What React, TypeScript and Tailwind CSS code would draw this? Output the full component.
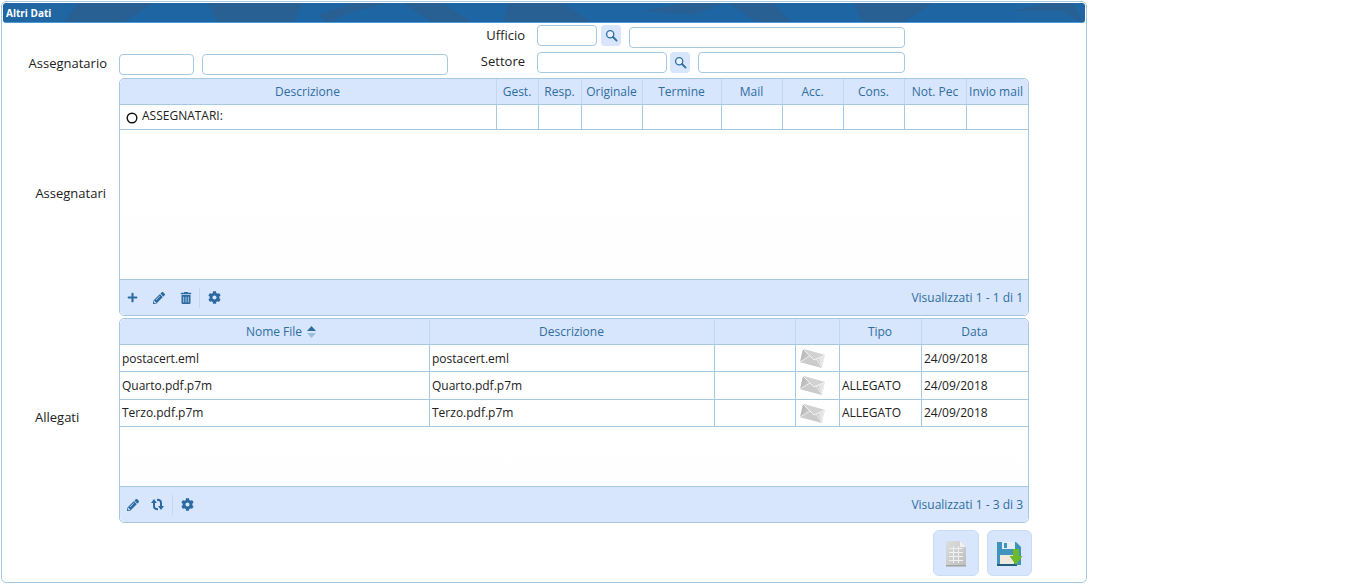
import { FaPlus, FaPencilAlt, FaTrashAlt, FaCog } from "react-icons/fa";

const Search = () => (
  <svg width="13" height="13" viewBox="0 0 13 13" fill="none">
    <circle cx="5.2" cy="5.2" r="3.6" stroke="#2f6f9f" strokeWidth="1.3" fill="#eaf2ff" />
    <path d="M8 8 L11.6 11.6" stroke="#2f6f9f" strokeWidth="1.8" strokeLinecap="round" />
  </svg>
);

const Refresh = () => (
  <svg width="13" height="13" viewBox="0 0 13 13" fill="none">
    <path d="M3 4 V8 Q3 11.2 7 11.2" stroke="#2a6aa0" strokeWidth="2" />
    <polygon points="0,5 6,5 3,1" fill="#2a6aa0" />
    <path d="M10 9 V5 Q10 1.8 6 1.8" stroke="#2a6aa0" strokeWidth="2" />
    <polygon points="7,8 13,8 10,12" fill="#2a6aa0" />
  </svg>
);

const Radio = () => (
  <svg className="mt-[2px] shrink-0" width="12" height="12" viewBox="0 0 12 12" fill="none">
    <circle cx="6" cy="6" r="4.8" stroke="#111" strokeWidth="1.4" />
  </svg>
);

const Envelope = () => (
  <svg width="27" height="21" viewBox="0 0 27 21">
    <defs>
      <linearGradient id="env" x1="0" y1="0" x2="1" y2="0.3">
        <stop offset="0" stopColor="#b0b0b0" />
        <stop offset="1" stopColor="#e8e8e8" />
      </linearGradient>
    </defs>
    <polygon points="4,1 26,7 23,20 1,14" fill="url(#env)" />
    <polygon points="4,1 15,12 26,7" fill="#d2d2d2" />
    <polygon points="1,14 11,8 15,12 19,10 23,20" fill="#cbcbcb" />
    <path d="M1 14 L11 8 M23 20 L17 10.5" stroke="#ececec" strokeWidth="1" />
    <path d="M4 1 L15 12 L26 7" stroke="#f2f2f2" strokeWidth="1" fill="none" />
  </svg>
);

const Doc = () => (
  <svg width="22" height="27" viewBox="0 0 22 27">
    <defs>
      <linearGradient id="docg" x1="0" y1="0" x2="1" y2="1">
        <stop offset="0" stopColor="#dedede" />
        <stop offset="1" stopColor="#bdbdbd" />
      </linearGradient>
    </defs>
    <polygon points="1,1 15,1 21,7 21,26 1,26" fill="url(#docg)" />
    <polygon points="15,1 21,7 15,7" fill="#f2f2f2" />
    <path d="M4 8.5H18M4 12.5H18M4 16.5H18M4 20.5H18M8.5 6V23M13.5 6V23" stroke="#f0f0f0" strokeWidth="1" />
    <rect x="1" y="25" width="20" height="1.5" fill="#a2a2a2" />
  </svg>
);

const Floppy = () => (
  <svg width="27" height="27" viewBox="0 0 27 27">
    <path d="M1 2 H20 L25 7 V25 H1 Z" fill="#3f93bd" />
    <rect x="6" y="2" width="13" height="7" fill="#e4eef4" />
    <rect x="8" y="3" width="3" height="5" fill="#3f93bd" />
    <rect x="4" y="15" width="14" height="9" fill="#eee9d8" />
    <rect x="1" y="24" width="20" height="2" fill="#1f5f82" />
    <path d="M17 9 H23 V16 H26.5 L20 25 L13.5 16 H17 Z" fill="#6cba2a" />
  </svg>
);

const inputCls = "h-[21px] rounded-[4px] border border-[#a6c9e2] bg-white";

function Tool({ children, w = "w-[27px]" }: { children: React.ReactNode; w?: string }) {
  return <span className={`flex ${w} justify-center text-[#2a6aa0]`}>{children}</span>;
}

const colsA = "grid-cols-[377px_42px_43px_61px_79px_61px_61px_61px_62px_61px]";
const colsB = "grid-cols-[310px_285px_81px_44px_82px_106px]";
const cell = "border-r border-[#a6c9e2] last:border-r-0";
const head = "flex items-center justify-center border-r border-[#c3d8ef] pr-[1px] last:border-r-0 text-[12px] text-[#2e6e9e] whitespace-nowrap";

function Footer({ tools, label }: { tools: React.ReactNode; label: string }) {
  return (
    <div className="flex h-[36px] items-center justify-between rounded-b-[5px] border-t border-[#a6c9e2] bg-[#d7e5fd] pr-[5px]">
      <div className="flex items-center">{tools}</div>
      <span className="text-[12px] text-[#2e6e9e]">{label}</span>
    </div>
  );
}

const Sep = () => <div className="h-[20px] w-px bg-[#c6d6ec]" />;

const rowsA = ["Descrizione", "Gest.", "Resp.", "Originale", "Termine", "Mail", "Acc.", "Cons.", "Not. Pec", "Invio mail"];
const rowsB = [
  ["postacert.eml", "postacert.eml", "", "24/09/2018", "h-[27px]", "pt-[1px]"],
  ["Quarto.pdf.p7m", "Quarto.pdf.p7m", "ALLEGATO", "24/09/2018", "h-[28px]", "pt-[1px]"],
  ["Terzo.pdf.p7m", "Terzo.pdf.p7m", "ALLEGATO", "24/09/2018", "h-[27px]", "pb-[1px]"],
];

export default function App() {
  return (
    <div className="h-[584px] w-[1350px] bg-white pl-[1px] pt-[1px] text-[13px] text-[#222] [font-family:'Open_Sans',sans-serif]">
      <div className="h-[582px] w-[1086px] rounded-[5px] border border-[#a6c9e2] bg-white p-[1px]">
        <div className="relative flex h-[20px] items-center overflow-hidden rounded-[3px] border-b border-[#4b9ad6] bg-[#1f66a3] pl-[3px] pt-[2px]">
          <svg className="absolute inset-0" width="1082" height="20" viewBox="0 0 1082 20">
            <g fill="#2c5f8e" opacity="0.75">
              <polygon points="60,20 75,0 150,0 120,20" />
              <polygon points="205,0 300,0 290,20 215,20" />
              <polygon points="315,12 350,0 385,0 345,10 325,20" />
              <polygon points="400,0 440,0 470,20 430,20" />
              <polygon points="505,0 560,0 590,20 500,20" />
              <polygon points="640,8 680,0 720,0 690,12" />
              <polygon points="725,0 770,0 790,20 755,20" />
              <polygon points="850,0 930,0 900,20 860,20" />
              <polygon points="1010,8 1045,0 1070,0 1080,20 1060,8" />
            </g>
          </svg>
          <span className="relative text-[10px] font-bold text-white">Altri Dati</span>
        </div>

        <div className="flex h-[52px] items-end">
          <div className="flex w-[113px] justify-end pb-[2px] pr-[9px]">Assegnatario</div>
          <div className="ml-[3px] flex gap-[8px]">
            <div className={`${inputCls} w-[75px]`} />
            <div className={`${inputCls} w-[246px]`} />
          </div>
          <div className="ml-[32px] flex flex-col gap-[4px] pb-[2px]">
            <div className="flex items-center">
              <span className="w-[45px] pt-[2px] text-right">Ufficio</span>
              <div className={`${inputCls} ml-[12px] w-[60px]`} />
              <button className="ml-[4px] flex h-[21px] w-[20px] items-center justify-center rounded-[4px] bg-[#d7e5fd]"><Search /></button>
              <div className={`${inputCls} ml-[8px] mt-[4px] w-[276px]`} />
            </div>
            <div className="flex items-center">
              <span className="w-[45px] pb-[2px] text-right">Settore</span>
              <div className={`${inputCls} ml-[12px] w-[130px]`} />
              <button className="ml-[3px] flex h-[21px] w-[20px] items-center justify-center rounded-[4px] bg-[#d7e5fd]"><Search /></button>
              <div className={`${inputCls} ml-[8px] w-[207px]`} />
            </div>
          </div>
        </div>

        <div className="mt-[3px] flex">
          <div className="flex w-[116px] items-center justify-end pr-[13px] pb-[6px]">Assegnatari</div>
          <div className="flex h-[238px] w-[910px] flex-col rounded-[5px] border border-[#a6c9e2]">
            <div className={`grid h-[26px] ${colsA} rounded-t-[5px] border-b border-[#a6c9e2] bg-[#d7e5fd]`}>
              {rowsA.map((t) => <div key={t} className={t === "Invio mail" ? `${head} pr-[3px]` : head}>{t}</div>)}
            </div>
            <div className={`grid h-[25px] ${colsA} border-b border-[#a6c9e2]`}>
              <div className={`${cell} flex items-center pl-[6px] text-[12px]`}>
                <Radio />
                <span className="ml-[4px] -mt-[2px]">ASSEGNATARI:</span>
              </div>
              {rowsA.slice(1).map((t) => <div key={t} className={cell} />)}
            </div>
            <div className="flex-1 bg-gradient-to-b from-white to-[#fefefe]" />
            <Footer
              label="Visualizzati 1 - 1 di 1"
              tools={<>
                <Tool w="w-[25px]"><FaPlus size={11} /></Tool>
                <Tool><FaPencilAlt size={12} /></Tool>
                <Tool><FaTrashAlt size={12} /></Tool>
                <Sep />
                <Tool w="w-[29px]"><FaCog size={13} /></Tool>
              </>}
            />
          </div>
        </div>

        <div className="mt-[2px] flex">
          <div className="flex w-[116px] items-center pl-[32px] pb-[5px]">Allegati</div>
          <div className="flex h-[205px] w-[910px] flex-col rounded-[5px] border border-[#a6c9e2]">
            <div className={`grid h-[26px] ${colsB} rounded-t-[5px] border-b border-[#a6c9e2] bg-[#d7e5fd]`}>
              <div className={head}>
                Nome File
                <svg className="-mr-[14px] ml-[5px]" width="9" height="12" viewBox="0 0 9 12">
                  <path d="M4.5 0 L9 5 H0 Z" fill="#2e6e9e" />
                  <path d="M4.5 12 L9 7 H0 Z" fill="#9dbde0" />
                </svg>
              </div>
              <div className={head}>Descrizione</div>
              <div className={head} />
              <div className={head} />
              <div className={head}>Tipo</div>
              <div className={head}>Data</div>
            </div>
            {rowsB.map((r) => (
              <div key={r[0]} className={`grid ${r[4]} ${colsB} border-b border-[#a6c9e2] text-[12px]`}>
                <div className={`${cell} ${r[5]} flex items-center pl-[2px]`}>{r[0]}</div>
                <div className={`${cell} ${r[5]} flex items-center pl-[2px]`}>{r[1]}</div>
                <div className={cell} />
                <div className={`${cell} flex items-center pl-[3px]`}><Envelope /></div>
                <div className={`${cell} ${r[5]} flex items-center pl-[2px]`}>{r[2]}</div>
                <div className={`${cell} ${r[5]} flex items-center pl-[2px]`}>{r[3]}</div>
              </div>
            ))}
            <div className="flex-1 bg-gradient-to-b from-white to-[#fefefe]" />
            <Footer
              label="Visualizzati 1 - 3 di 3"
              tools={<>
                <Tool w="w-[25px]"><FaPencilAlt size={12} /></Tool>
                <Tool w="w-[25px]"><Refresh /></Tool>
                <div className="ml-[2px]"><Sep /></div>
                <Tool w="w-[29px]"><FaCog size={13} /></Tool>
              </>}
            />
          </div>
        </div>

        <div className="mt-[7px] flex justify-end gap-[8px] pr-[53px]">
          <button className="flex h-[46px] w-[46px] items-center justify-center rounded-[6px] border border-[#c9dcf5] bg-[#d7e5fd]"><Doc /></button>
          <button className="flex h-[46px] w-[45px] items-center justify-center rounded-[6px] border border-[#c9dcf5] bg-[#d7e5fd]"><Floppy /></button>
        </div>
      </div>
    </div>
  );
}
